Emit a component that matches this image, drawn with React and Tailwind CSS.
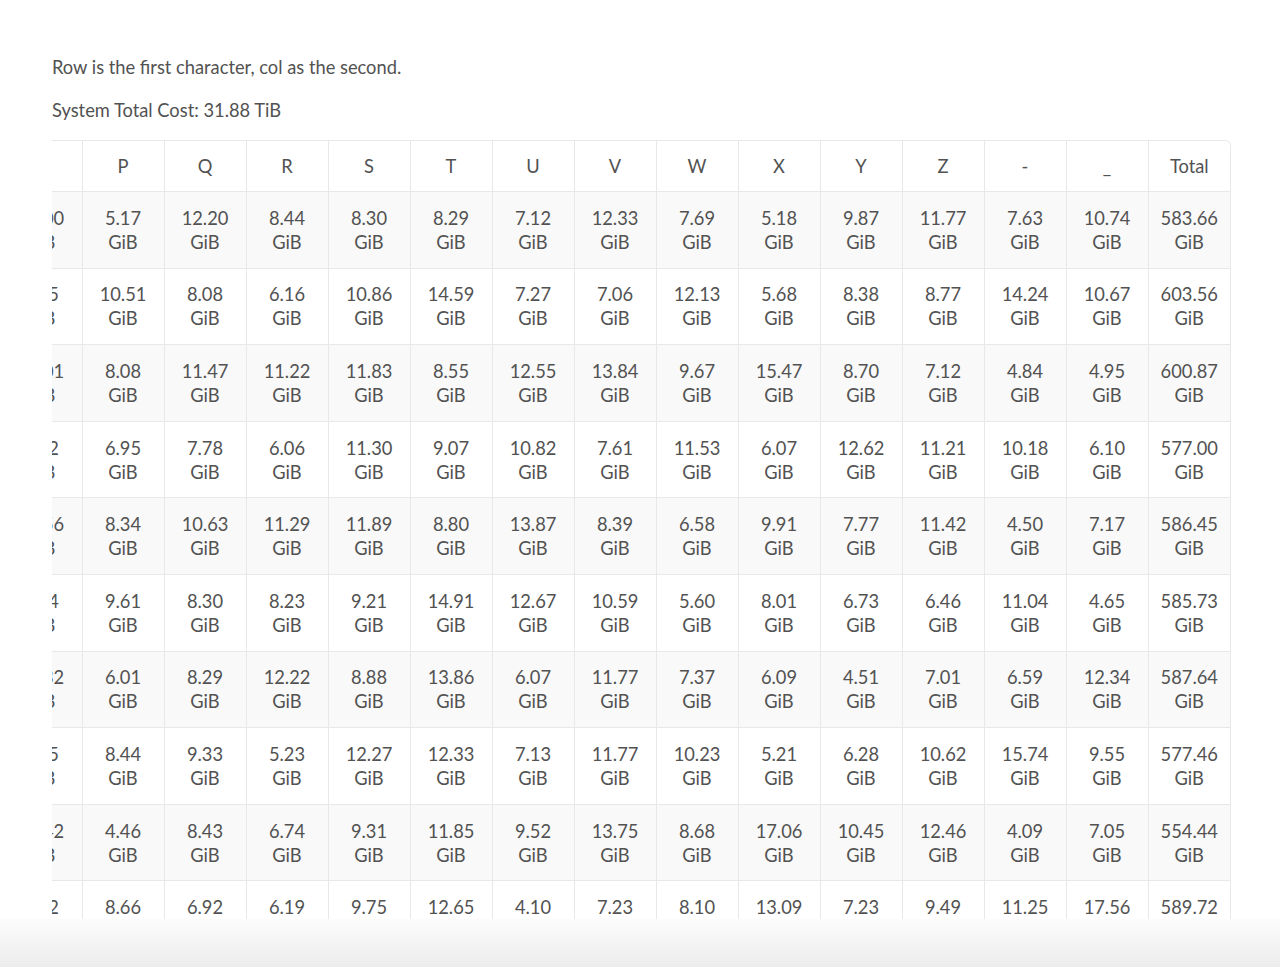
import React, { useEffect, useRef } from "react";

const COLS = ["O", "P", "Q", "R", "S", "T", "U", "V", "W", "X", "Y", "Z", "-", "_", "Total"];

const ROWS = [
  ["11.00", "5.17", "12.20", "8.44", "8.30", "8.29", "7.12", "12.33", "7.69", "5.18", "9.87", "11.77", "7.63", "10.74", "583.66"],
  ["6.85", "10.51", "8.08", "6.16", "10.86", "14.59", "7.27", "7.06", "12.13", "5.68", "8.38", "8.77", "14.24", "10.67", "603.56"],
  ["12.01", "8.08", "11.47", "11.22", "11.83", "8.55", "12.55", "13.84", "9.67", "15.47", "8.70", "7.12", "4.84", "4.95", "600.87"],
  ["8.92", "6.95", "7.78", "6.06", "11.30", "9.07", "10.82", "7.61", "11.53", "6.07", "12.62", "11.21", "10.18", "6.10", "577.00"],
  ["13.56", "8.34", "10.63", "11.29", "11.89", "8.80", "13.87", "8.39", "6.58", "9.91", "7.77", "11.42", "4.50", "7.17", "586.45"],
  ["7.74", "9.61", "8.30", "8.23", "9.21", "14.91", "12.67", "10.59", "5.60", "8.01", "6.73", "6.46", "11.04", "4.65", "585.73"],
  ["10.32", "6.01", "8.29", "12.22", "8.88", "13.86", "6.07", "11.77", "7.37", "6.09", "4.51", "7.01", "6.59", "12.34", "587.64"],
  ["6.45", "8.44", "9.33", "5.23", "12.27", "12.33", "7.13", "11.77", "10.23", "5.21", "6.28", "10.62", "15.74", "9.55", "577.46"],
  ["14.42", "4.46", "8.43", "6.74", "9.31", "11.85", "9.52", "13.75", "8.68", "17.06", "10.45", "12.46", "4.09", "7.05", "554.44"],
  ["8.22", "8.66", "6.92", "6.19", "9.75", "12.65", "4.10", "7.23", "8.10", "13.09", "7.23", "9.49", "11.25", "17.56", "589.72"],
  ["9.14", "7.40", "10.02", "8.57", "6.33", "9.18", "11.64", "8.05", "12.71", "7.92", "5.86", "10.27", "9.03", "8.41", "592.18"],
];

function CostTable() {
  const scroller = useRef(null);

  useEffect(() => {
    // scrolled so only the tail of column O peeks in on the left
    if (scroller.current) scroller.current.scrollLeft = 52;
  }, []);

  return (
    <div
      ref={scroller}
      className="overflow-x-auto border-t border-r border-[#e8e8e8] rounded-tr-[6px] [scrollbar-width:none]"
    >
      <table className="border-collapse">
        <thead>
          <tr className="bg-white">
            {COLS.map((c, i) => (
              <th
                key={c}
                className={`w-[82px] min-w-[82px] max-w-[82px] p-0 py-[13px] font-normal text-center leading-[24px] border-b border-[#e8e8e8] ${
                  i < COLS.length - 1 ? "border-r" : ""
                }`}
              >
                {c}
              </th>
            ))}
          </tr>
        </thead>
        <tbody>
          {ROWS.map((row, r) => (
            <tr key={r} className={r % 2 === 0 ? "bg-[#f9f9f9]" : "bg-white"}>
              {row.map((v, i) => (
                <td
                  key={i}
                  className={`p-0 py-[13.8px] text-center leading-[24px] border-b border-[#e8e8e8] ${
                    i < row.length - 1 ? "border-r" : ""
                  }`}
                >
                  {v}
                  <br />
                  GiB
                </td>
              ))}
            </tr>
          ))}
        </tbody>
      </table>
    </div>
  );
}

export default function App() {
  return (
    <div className="h-[967px] flex flex-col bg-white text-[#525252] text-[18.3px] font-['Lato','Liberation_Sans',sans-serif]">
      <div className="flex-1 overflow-hidden pl-[52px] pr-[49px] pt-[54px]">
        <p className="leading-[26px]">Row is the first character, col as the second.</p>
        <p className="mt-[17px] leading-[26px]">System Total Cost: 31.88 TiB</p>
        <div className="mt-[17px] w-[1179px]">
          <CostTable />
        </div>
      </div>
      <div className="h-[48px] bg-gradient-to-b from-[#fcfcfc] to-[#ececec]" />
    </div>
  );
}
